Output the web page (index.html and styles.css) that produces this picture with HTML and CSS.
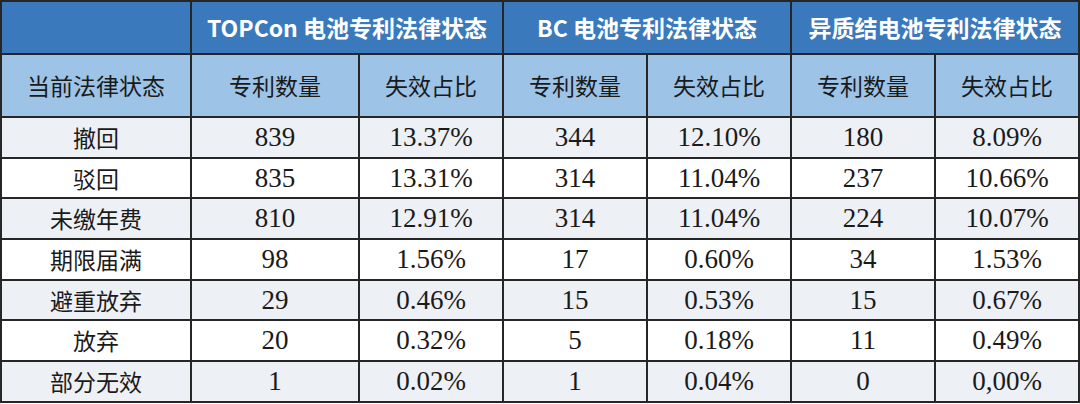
FILE: index.html
```html
<!DOCTYPE html>
<html lang="zh">
<head>
<meta charset="utf-8">
<link rel="stylesheet" href="styles.css">
</head>
<body>
<table class="tbl">
  <colgroup>
    <col class="c-state">
    <col class="c-wide">
    <col class="c-n"><col class="c-n"><col class="c-n"><col class="c-n"><col class="c-n">
  </colgroup>
  <thead>
    <tr class="h1">
      <th></th>
      <th colspan="2">TOPCon 电池专利法律状态</th>
      <th colspan="2">BC 电池专利法律状态</th>
      <th colspan="2">异质结电池专利法律状态</th>
    </tr>
    <tr class="h2">
      <th>当前法律状态</th>
      <th>专利数量</th><th>失效占比</th>
      <th>专利数量</th><th>失效占比</th>
      <th>专利数量</th><th>失效占比</th>
    </tr>
  </thead>
  <tbody>
    <tr class="alt"><td class="lbl">撤回</td><td>839</td><td>13.37%</td><td>344</td><td>12.10%</td><td>180</td><td>8.09%</td></tr>
    <tr><td class="lbl">驳回</td><td>835</td><td>13.31%</td><td>314</td><td>11.04%</td><td>237</td><td>10.66%</td></tr>
    <tr class="alt"><td class="lbl">未缴年费</td><td>810</td><td>12.91%</td><td>314</td><td>11.04%</td><td>224</td><td>10.07%</td></tr>
    <tr><td class="lbl">期限届满</td><td>98</td><td>1.56%</td><td>17</td><td>0.60%</td><td>34</td><td>1.53%</td></tr>
    <tr class="alt"><td class="lbl">避重放弃</td><td>29</td><td>0.46%</td><td>15</td><td>0.53%</td><td>15</td><td>0.67%</td></tr>
    <tr><td class="lbl">放弃</td><td>20</td><td>0.32%</td><td>5</td><td>0.18%</td><td>11</td><td>0.49%</td></tr>
    <tr class="alt"><td class="lbl">部分无效</td><td>1</td><td>0.02%</td><td>1</td><td>0.04%</td><td>0</td><td>0,00%</td></tr>
  </tbody>
</table>
</body>
</html>
```

FILE: styles.css
```css
html, body {
  margin: 0;
  padding: 0;
  background: #ffffff;
}
.tbl {
  border-collapse: collapse;
  table-layout: fixed;
  width: 1080px;
  margin: 0;
}
.c-state { width: 190px; }
.c-wide { width: 168px; }
.c-n { width: 144px; }
.tbl th, .tbl td {
  border: 2px solid #262626;
  padding: 0;
  text-align: center;
  vertical-align: middle;
}
.h1 th {
  background: #3a79bc;
  color: #ffffff;
  font-family: "Noto Sans CJK SC", "Noto Sans", sans-serif;
  font-weight: 700;
  font-size: 23px;
  line-height: 1;
  height: 51px;
}
.h2 th {
  background: #9dc3e6;
  color: #1a1a1a;
  font-family: "Noto Sans CJK SC", "Noto Sans", sans-serif;
  font-weight: 400;
  font-size: 23px;
  line-height: 1;
  height: 61px;
}
.tbl td {
  font-family: "Liberation Serif", "Times New Roman", serif;
  font-size: 27px;
  color: #1a1a1a;
  height: 38.7px;
  line-height: 1;
  background: #ffffff;
}
.tbl tr.alt td {
  background: #edf0f4;
}
.tbl td.lbl {
  font-family: "Noto Sans CJK SC", "Noto Sans", sans-serif;
  font-size: 23px;
}
```
